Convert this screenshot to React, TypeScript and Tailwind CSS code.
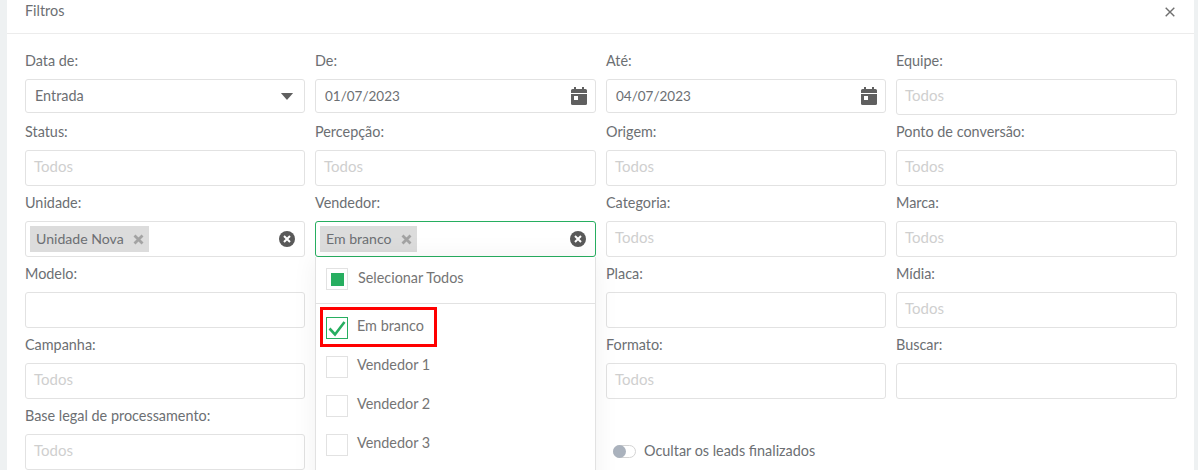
import React from "react";

const font = "font-['Lato','Noto_Sans',sans-serif]";

function Label({ children }: { children: React.ReactNode }) {
  return <div className="h-[18px] mb-[9px] text-[14.4px] leading-[18px] text-[#6c6f73]">{children}</div>;
}

function Box({ children, tall = true, green = false }: { children?: React.ReactNode; tall?: boolean; green?: boolean }) {
  return (
    <div
      className={`flex items-center rounded-[3px] border bg-white px-[9px] ${tall ? "h-[36px]" : "h-[34px]"} ${
        green ? "border-[#27ae60]" : "border-[#e2e2e2]"
      }`}
    >
      {children}
    </div>
  );
}

function Field({ label, text }: { label: string; text?: string }) {
  return (
    <div>
      <Label>{label}</Label>
      <Box>{text && <span className="mb-[3px] ml-[-1px] text-[15px] text-[#cfcfcf]">{text}</span>}</Box>
    </div>
  );
}

function Calendar() {
  return (
    <svg width="16" height="18" viewBox="0 0 16 18" className="ml-auto mr-[-1px]">
      <rect x="3" y="0" width="2" height="4" fill="#5f5f5f" />
      <rect x="11" y="0" width="2" height="4" fill="#5f5f5f" />
      <path d="M1.500 2h13A1.500 1.500 0 0 1 16 3.500V6H0V3.500A1.500 1.500 0 0 1 1.500 2Z" fill="#5f5f5f" />
      <path d="M0 7h16v9.500a1.500 1.500 0 0 1-1.500 1.500h-13A1.500 1.500 0 0 1 0 16.500Z" fill="#5f5f5f" />
      <rect x="3" y="9" width="4" height="4" fill="#fff" />
    </svg>
  );
}

function DateField({ label, value }: { label: string; value: string }) {
  return (
    <div>
      <Label>{label}</Label>
      <Box tall={false}>
        <span className="text-[13.5px] text-[#6c6f73]">{value}</span>
        <Calendar />
      </Box>
    </div>
  );
}

function Clear() {
  return (
    <svg width="16" height="16" viewBox="0 0 16 16" className="ml-auto">
      <circle cx="8" cy="8" r="8" fill="#595959" />
      <path d="M5 5l6 6M11 5l-6 6" stroke="#fff" strokeWidth="2" />
    </svg>
  );
}

function Tag({ children }: { children: string }) {
  return (
    <span className="ml-[-5px] flex h-[26px] items-center gap-[9px] bg-[#dcdcdc] pl-[6px] pr-[5px] text-[14.1px] text-[#6c6f73]">
      <span className="mb-[1px]">{children}</span>
      <svg width="11" height="11" viewBox="0 0 11 11">
        <path d="M1.500 1.500l8 8M9.500 1.500l-8 8" stroke="#a3a3a3" strokeWidth="2.800" />
      </svg>
    </span>
  );
}

function Check({ state }: { state?: "all" | "on" }) {
  return (
    <span
      className={`flex h-[22px] w-[22px] shrink-0 items-center justify-center border ${
        state === "on" ? "border-[#27ae60]" : "border-[#e2e2e2]"
      }`}
    >
      {state === "all" && <span className="h-[13px] w-[13px] bg-[#27ae60]" />}
      {state === "on" && (
        <svg width="20" height="18" viewBox="0 0 20 18">
          <path d="M2.500 9.500l5.500 6L17.500 3" fill="none" stroke="#27ae60" strokeWidth="2.600" />
        </svg>
      )}
    </span>
  );
}

function Option({ label, state }: { label: string; state?: "on" }) {
  return (
    <div className="flex h-[39px] items-start gap-[9px] pl-[10px] pt-[8px] text-[14.4px] leading-[18px] text-[#757575]">
      <Check state={state} />
      <span>{label}</span>
    </div>
  );
}

export default function App() {
  return (
    <div className={`h-[470px] w-[1198px] overflow-hidden bg-[#eef1f2] px-[7px] ${font}`}>
      <div className="h-full w-[1187px] bg-white">
        <div className="flex h-[34px] items-start justify-between border-b border-[#ececec] pl-[18px] pr-[19px] pt-[2px] text-[14.4px] leading-[18px] text-[#6c6f73]">
          <span>Filtros</span>
          <svg width="10" height="10" viewBox="0 0 10 10" className="mt-[5px]">
            <path d="M.7.700l8.600 8.600M9.300.700L.700 9.300" stroke="#6f6f6f" strokeWidth="1.400" />
          </svg>
        </div>
        <div className="grid grid-cols-[280px_281px_280px_281px] auto-rows-[71px] gap-x-[10px] pl-[18px] pt-[18px]">
          <div>
            <Label>Data de:</Label>
            <Box tall={false}>
              <span className="mb-[1px] text-[14.4px] text-[#6c6f73]">Entrada</span>
              <svg width="12" height="7" viewBox="0 0 12 7" className="ml-auto mr-[2px]">
                <path d="M.5 0h11q.5 0 .2.5L6.400 6.600q-.4.4-.8 0L.3.500Q0 0 .5 0Z" fill="#5f5f5f" />
              </svg>
            </Box>
          </div>
          <DateField label="De:" value="01/07/2023" />
          <DateField label="Até:" value="04/07/2023" />
          <Field label="Equipe:" text="Todos" />

          <Field label="Status:" text="Todos" />
          <Field label="Percepção:" text="Todos" />
          <Field label="Origem:" text="Todos" />
          <Field label="Ponto de conversão:" text="Todos" />

          <div>
            <Label>Unidade:</Label>
            <Box>
              <Tag>Unidade Nova</Tag>
              <Clear />
            </Box>
          </div>
          <div className="relative z-10">
            <Label>Vendedor:</Label>
            <Box green>
              <Tag>Em branco</Tag>
              <Clear />
            </Box>
            <div className="absolute left-0 right-0 top-[63px] h-[300px] border-x border-[#e2e2e2] bg-white shadow-[0_0_24px_rgba(0,0,0,0.06)]">
              <div className="flex h-[47px] items-start gap-[10px] border-b border-[#e2e2e2] pl-[10px] pt-[11px] text-[14.4px] leading-[18px] text-[#757575]">
                <Check state="all" />
                <span className="mt-[1px]">Selecionar Todos</span>
              </div>
              <div className="relative">
                <div className="absolute left-[4px] top-[3px] h-[40px] w-[117px] border-[3px] border-[#ff0000]" />
                <div className="h-[5px]" />
                <Option label="Em branco" state="on" />
                <Option label="Vendedor 1" />
                <Option label="Vendedor 2" />
                <Option label="Vendedor 3" />
              </div>
            </div>
          </div>
          <Field label="Categoria:" text="Todos" />
          <Field label="Marca:" text="Todos" />

          <Field label="Modelo:" />
          <div />
          <Field label="Placa:" />
          <Field label="Mídia:" text="Todos" />

          <Field label="Campanha:" text="Todos" />
          <div />
          <Field label="Formato:" text="Todos" />
          <Field label="Buscar:" />

          <Field label="Base legal de processamento:" text="Todos" />
          <div />
          <div className="flex items-start gap-[8px] pl-[7px] pt-[35px] text-[14.4px] leading-[18px] text-[#6c6f73]">
            <span className="mt-[3px] flex h-[13px] w-[23px] items-center rounded-full border border-[#d4d4d4] bg-white">
              <span className="ml-[-1px] h-[13px] w-[13px] rounded-full bg-[#aab2bd]" />
            </span>
            <span>Ocultar os leads finalizados</span>
          </div>
          <div />
        </div>
      </div>
    </div>
  );
}
